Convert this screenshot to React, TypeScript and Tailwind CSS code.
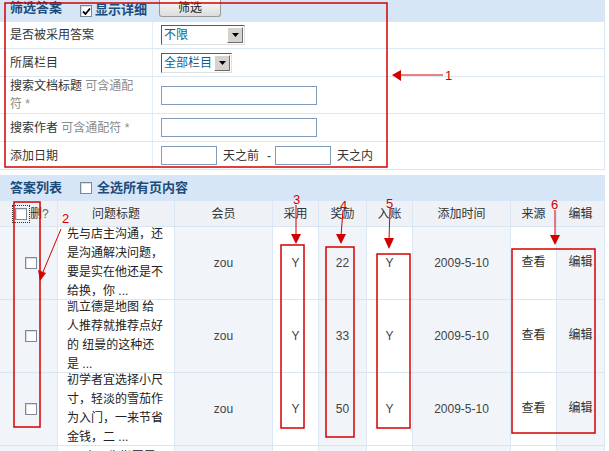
const font = { fontFamily: '"Liberation Sans", "Noto Sans CJK SC", sans-serif' };

const Box = ({ checked = false }: { checked?: boolean }) => (
  <span className="inline-flex w-[12px] h-[12px] bg-white border border-[#7b8a99] shadow-[inset_1px_1px_1px_rgba(0,0,0,0.15)] items-center justify-center flex-shrink-0">
    {checked && (
      <svg width="9" height="9" viewBox="0 0 9 9">
        <path d="M1 4.5 L3.5 7 L8 1.5" stroke="#000" strokeWidth="1.8" fill="none" />
      </svg>
    )}
  </span>
);

const Select = ({ label, width }: { label: string; width: string }) => (
  <div className={`${width} h-[20px] flex items-stretch border border-t-[#5a5a5a] border-l-[#5a5a5a] border-r-[#e0e0e0] border-b-[#e0e0e0] bg-white`}>
    <span className="flex-1 pl-[2px] text-[12px] leading-[18px] text-[#0b5f8f] whitespace-nowrap overflow-hidden">{label}</span>
    <span className="w-[16px] flex-shrink-0 m-[1px] bg-[#d6d3ce] border border-t-white border-l-white border-r-[#6d6d6d] border-b-[#6d6d6d] flex items-center justify-center">
      <svg width="7" height="4" viewBox="0 0 7 4">
        <path d="M0 0 H7 L3.5 4 Z" fill="#000" />
      </svg>
    </span>
  </div>
);

const Input = ({ width }: { width: string }) => (
  <div className={`${width} h-[19px] border border-[#7f9db9] bg-white`} />
);

const cols = ['w-[58px]', 'w-[117px]', 'w-[98px]', 'w-[46px]', 'w-[48px]', 'w-[46px]', 'w-[98px]', 'w-[46px]', 'w-[48px]'];

const rows = [
  { title: '先与店主沟通，还是沟通解决问题，要是实在他还是不给换，你 ...', reward: '22' },
  { title: '凯立德是地图 给人推荐就推荐点好的 纽曼的这种还是 ...', reward: '33' },
  { title: '初学者宜选择小尺寸，轻淡的雪茄作为入门，一来节省金钱，二 ...', reward: '50' },
  { title: '2.0会员先指因雪茄的品 ...', reward: '18' },
];

const Annotations = () => (
  <svg className="absolute left-0 top-0 pointer-events-none" width="609" height="451" viewBox="0 0 609 451">
    <g fill="none" stroke="#d40000" strokeWidth="1.5">
      <rect x="5" y="3" width="382" height="164" />
      <rect x="14" y="202" width="26" height="225" />
      <rect x="281" y="245" width="23" height="183" />
      <rect x="326" y="247" width="28" height="190" />
      <rect x="377" y="254" width="33" height="174" />
      <rect x="512" y="249" width="83" height="184" />
    </g>
    <g stroke="#d40000" strokeWidth="1">
      <line x1="443" y1="75" x2="400" y2="75" />
      <line x1="61" y1="229" x2="43" y2="272" />
      <line x1="296" y1="205" x2="296" y2="236" />
      <line x1="343" y1="210" x2="341" y2="236" />
      <line x1="390" y1="208" x2="389" y2="240" />
      <line x1="555" y1="210" x2="555" y2="237" />
    </g>
    <g fill="#d40000">
      <polygon points="392,75 401,70 401,81" />
      <polygon points="40,281 38,270 46,273" />
      <polygon points="296,244 291,234 301,234" />
      <polygon points="341,244 336,234 346,234" />
      <polygon points="389,249 384,238 394,238" />
      <polygon points="555,245 550,235 560,235" />
    </g>
    <g fill="#d40000" fontSize="13" style={font}>
      <text x="445" y="80">1</text>
      <text x="62" y="223">2</text>
      <text x="293" y="204">3</text>
      <text x="340" y="210">4</text>
      <text x="386" y="208">5</text>
      <text x="551" y="209">6</text>
    </g>
  </svg>
);

export default function App() {
  return (
    <div className="relative w-[609px] h-[451px] overflow-hidden bg-white text-[#333]" style={font}>
      <div className="w-[605px]">
        {/* 筛选 */}
        <div className="border-r border-b border-[#d9e6f2]">
          <div className="h-[21px] bg-[#d6e6f6] flex items-start">
            <span className="ml-[10px] mt-[1px] text-[13px] leading-[13px] font-bold text-[#1b4c7c]">筛选答案</span>
            <span className="ml-[18px] mt-[5px] flex items-center gap-[3px]">
              <Box checked />
              <span className="text-[13px] leading-[13px] -mt-[4px] font-bold text-[#1b4c7c]">显示详细</span>
            </span>
            <button className="ml-[12px] w-[62px] h-[17px] rounded-b-[3px] border border-t-0 border-[#9a9a9a] bg-gradient-to-b from-[#fafafa] to-[#dcdcdc] text-[12px] leading-[14px] text-[#222]">
              筛选
            </button>
          </div>
          {[
            { label: <>是否被采用答案</>, field: <Select label="不限" width="w-[84px]" />, h: 'h-[27px]' },
            { label: <>所属栏目</>, field: <Select label="全部栏目" width="w-[71px]" />, h: 'h-[28px]' },
            {
              label: (
                <>
                  搜索文档标题 <span className="text-[#8c8c8c]">可含通配符 *</span>
                </>
              ),
              field: <Input width="w-[156px]" />,
              h: 'h-[37px]',
            },
            {
              label: (
                <>
                  搜索作者 <span className="text-[#8c8c8c]">可含通配符 *</span>
                </>
              ),
              field: <Input width="w-[156px]" />,
              h: 'h-[28px]',
            },
            {
              label: <>添加日期</>,
              field: (
                <div className="flex items-center text-[12px]">
                  <Input width="w-[56px]" />
                  <span className="ml-[6px]">天之前</span>
                  <span className="ml-[8px]">-</span>
                  <span className="ml-[4px]"><Input width="w-[56px]" /></span>
                  <span className="ml-[6px]">天之内</span>
                </div>
              ),
              h: 'h-[28px]',
            },
          ].map((r, i) => (
            <div key={i} className={`flex ${r.h} border-t border-[#dbe7f3]`}>
              <div className="w-[153px] border-r border-[#e3edf6] pl-[10px] pr-[12px] flex items-center text-[12px] leading-[18px]">
                <span>{r.label}</span>
              </div>
              <div className="flex-1 pl-[8px] flex items-center">{r.field}</div>
            </div>
          ))}
        </div>

        {/* 答案列表 */}
        <div className="mt-[5px]">
          <div className="h-[26px] bg-[#d6e6f6] flex items-center">
            <span className="ml-[10px] text-[13px] font-bold text-[#1b4c7c]">答案列表</span>
            <span className="ml-[18px] flex items-center gap-[5px]">
              <Box />
              <span className="text-[13px] font-bold text-[#1b4c7c]">全选所有页内容</span>
            </span>
          </div>
          <div className="flex h-[26px] bg-[#eef2f7] border-b border-[#d9e6f2] text-[12px] text-[#333]">
            <div className={`${cols[0]} border-r border-[#dbe7f3] flex items-center pl-[13px]`}>
              <span className="outline outline-1 outline-dotted outline-[#333] p-[2px] flex">
                <Box />
              </span>
              <span className="ml-[1px]">删<span className="text-[#666]">?</span></span>
            </div>
            {['问题标题', '会员', '采用', '奖励', '入账', '添加时间', '来源', '编辑'].map((h, i) => (
              <div key={h} className={`${cols[i + 1]} border-r border-[#dbe7f3] flex items-center justify-center`}>
                {h}
              </div>
            ))}
          </div>
          {rows.map((r, i) => (
            <div key={i} className="flex h-[73px] border-b border-[#d9e6f2] text-[12px]">
              <div className={`${cols[0]} bg-[#f1f4f8] border-r border-[#dbe7f3] flex items-center justify-center`}>
                <span className="ml-[5px] flex"><Box /></span>
              </div>
              <div className={`${cols[1]} bg-white border-r border-[#dbe7f3] flex ${i === 3 ? 'items-start pt-[2px]' : 'items-center'} pl-[9px] pr-[10px]`}>
                <span className="leading-[19px] text-[#222]">{r.title}</span>
              </div>
              <div className={`${cols[2]} bg-[#f1f4f8] border-r border-[#dbe7f3] flex items-center justify-center text-[#444]`}>
                {i < 3 ? 'zou' : ''}
              </div>
              <div className={`${cols[3]} bg-white border-r border-[#dbe7f3] flex items-center justify-center text-[#444]`}>
                {i < 3 ? 'Y' : ''}
              </div>
              <div className={`${cols[4]} bg-[#f1f4f8] border-r border-[#dbe7f3] flex items-center justify-center text-[#444]`}>
                {i < 3 ? r.reward : ''}
              </div>
              <div className={`${cols[5]} bg-white border-r border-[#dbe7f3] flex items-center justify-center text-[#444]`}>
                {i < 3 ? 'Y' : ''}
              </div>
              <div className={`${cols[6]} bg-[#f1f4f8] border-r border-[#dbe7f3] flex items-center justify-center text-[#444]`}>
                {i < 3 ? '2009-5-10' : ''}
              </div>
              <div className={`${cols[7]} bg-white border-r border-[#dbe7f3] flex items-center justify-center text-[#333] pb-[2px]`}>
                {i < 3 ? '查看' : ''}
              </div>
              <div className={`${cols[8]} bg-[#f1f4f8] border-r border-[#dbe7f3] flex items-center justify-center text-[#333] pb-[2px]`}>
                {i < 3 ? '编辑' : ''}
              </div>
            </div>
          ))}
        </div>
      </div>
      <Annotations />
    </div>
  );
}
